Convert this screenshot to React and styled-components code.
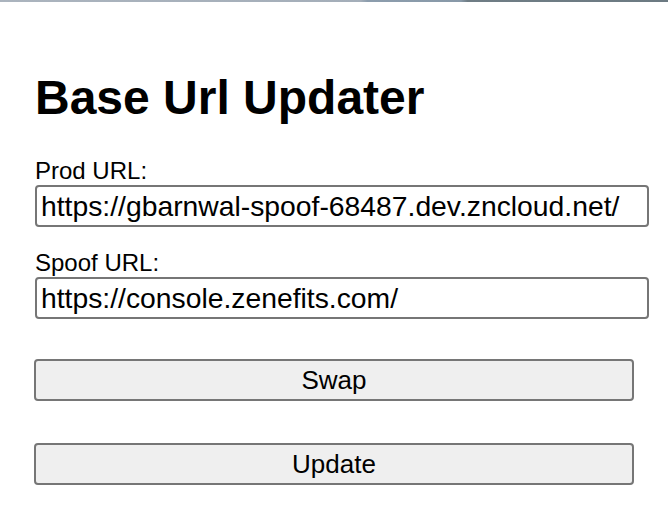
import React, { useState } from 'react'
import styled, { createGlobalStyle } from 'styled-components'

const GlobalStyle = createGlobalStyle`
    body {
        margin: 0;
        background: #ffffff;
        font-family: "Liberation Sans", Arial, sans-serif;
        color: #000;
    }
`

function App() {
    const [prod, setProd] = useState('https://gbarnwal-spoof-68487.dev.zncloud.net/')
    const [spoof, setSpoof] = useState('https://console.zenefits.com/')

    const swap = () => {
        setProd(spoof)
        setSpoof(prod)
    }

    return (
        <>
            <GlobalStyle />
            <TopBar />
            <Page>
                <Title>Base Url Updater</Title>
                <Field>
                    <Label htmlFor="prod">Prod URL:</Label>
                    <UrlInput id="prod" value={prod} onChange={e => setProd(e.target.value)} />
                </Field>
                <Field>
                    <Label htmlFor="spoof">Spoof URL:</Label>
                    <UrlInput id="spoof" value={spoof} onChange={e => setSpoof(e.target.value)} />
                </Field>
                <Actions>
                    <ActionButton onClick={swap}>Swap</ActionButton>
                    <ActionButton>Update</ActionButton>
                </Actions>
            </Page>
        </>
    )
}

export default App


const TopBar = styled.div`
    height: 2px;
    background: linear-gradient(to right, #abb4be 0%, #a4aeb9 54%, #8c9dad 55%, #8899a8 69%, #6f7d85 70%, #6c7a82 100%);
`

const Page = styled.div`
    padding: 68px 35px 0 35px;
`

const Title = styled.h1`
    margin: 0 0 32px 0;
    font-size: 48px;
    font-weight: bold;
    line-height: normal;
`

const Field = styled.div`
    display: flex;
    flex-direction: column;
    align-items: flex-start;
    margin-bottom: 22px;
`

const Label = styled.label`
    font-size: 24px;
    line-height: normal;
`

const UrlInput = styled.input`
    box-sizing: border-box;
    width: 614px;
    height: 42px;
    padding: 0 5px 0 4px;
    border: 2px solid #767676;
    border-radius: 4px;
    font-family: "Liberation Sans", Arial, sans-serif;
    font-size: 28.3px;
    color: #000;
    background: #fff;
    outline: none;
`

const Actions = styled.div`
    display: flex;
    flex-direction: column;
    gap: 42px;
    padding-top: 18px;
    margin-left: -1px;
`

const ActionButton = styled.button`
    box-sizing: border-box;
    width: 600px;
    height: 42px;
    border: 2px solid #767676;
    border-radius: 4px;
    background: #efefef;
    font-family: "Liberation Sans", Arial, sans-serif;
    font-size: 26px;
    color: #000;
    cursor: pointer;
`
